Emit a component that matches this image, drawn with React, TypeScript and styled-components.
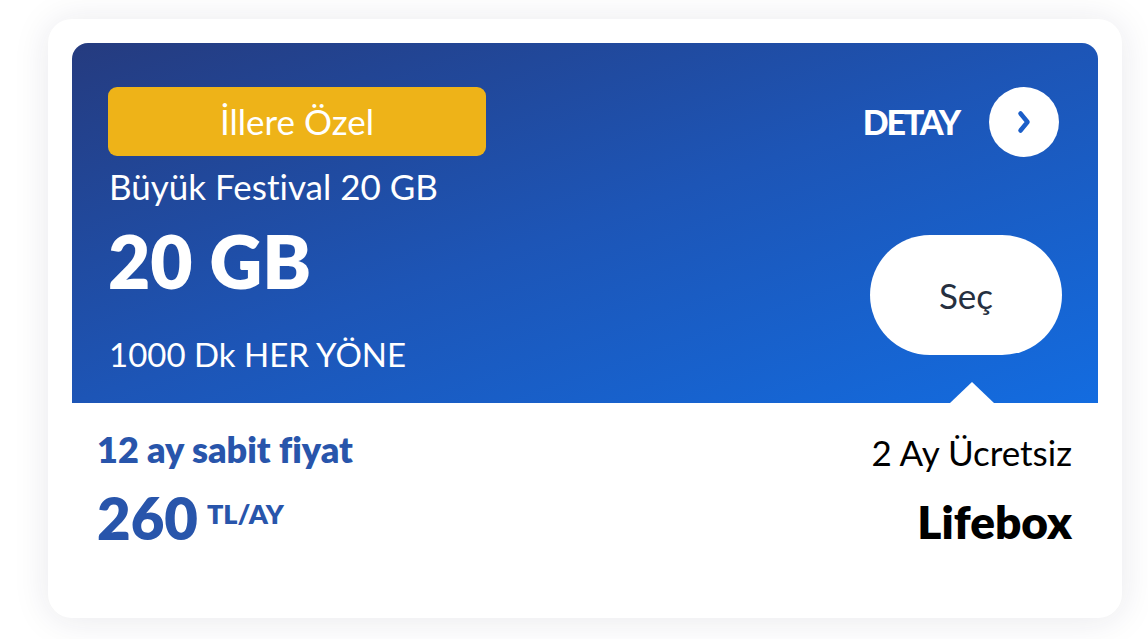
import React from "react";
import styled, { createGlobalStyle } from "styled-components";

const Global = createGlobalStyle`
  html, body { margin: 0; padding: 0; background: #ffffff; }
  body {
    font-family: Lato, "Noto Sans", sans-serif;
    -webkit-font-smoothing: antialiased;
    font-variant-ligatures: none;
    font-feature-settings: "liga" 0, "clig" 0;
  }
`;

const Page = styled.div`
  padding: 19px 0 0 48px;
  width: 1148px;
  height: 639px;
  box-sizing: border-box;
`;

const Card = styled.div`
  width: 1074px;
  height: 599px;
  box-sizing: border-box;
  background: #fff;
  border-radius: 24px;
  padding: 24px;
  box-shadow: 0 2px 36px rgba(30, 30, 70, 0.1);
  display: flex;
  flex-direction: column;
`;

const Hero = styled.div`
  position: relative;
  height: 360px;
  box-sizing: border-box;
  border-radius: 16px 16px 0 0;
  background: linear-gradient(to bottom right, #253b7f 0%, #1d55b6 50%, #136ce0 100%);
  padding: 44px 36px 0 36px;
  display: flex;
  justify-content: space-between;
`;

const LeftCol = styled.div`
  display: flex;
  flex-direction: column;
  color: #fff;
`;

const Badge = styled.div`
  width: 378px;
  height: 69px;
  border-radius: 9px;
  background: #eeb318;
  color: #fff;
  font-size: 35px;
  line-height: 35px;
  font-weight: 400;
  display: flex;
  align-items: center;
  justify-content: center;
`;

const Title = styled.div`
  margin-top: 13px;
  font-size: 35px;
  line-height: 35px;
  padding-left: 1px;
`;

const Big = styled.div`
  margin-top: 21px;
  font-size: 73px;
  font-weight: 800;
  line-height: 73px;
`;

const Minutes = styled.div`
  margin-top: 40px;
  font-size: 33px;
  line-height: 33px;
  padding-left: 1px;
`;

const RightCol = styled.div`
  display: flex;
  flex-direction: column;
  align-items: flex-end;
`;

const DetailRow = styled.div`
  display: flex;
  align-items: center;
  gap: 30px;
  margin-right: 3px;
`;

const DetailText = styled.span`
  color: #fff;
  font-size: 34px;
  line-height: 34px;
  font-weight: 900;
  letter-spacing: -2.2px;
`;

const Circle = styled.div`
  width: 70px;
  height: 70px;
  border-radius: 50%;
  background: #fff;
  display: flex;
  align-items: center;
  justify-content: center;
`;

const SelectButton = styled.div`
  margin-top: 78px;
  width: 192px;
  height: 120px;
  border-radius: 60px;
  background: #fff;
  color: #263040;
  font-size: 35px;
  line-height: 35px;
  display: flex;
  align-items: center;
  justify-content: center;
`;

const Notch = styled.div`
  position: absolute;
  right: 104px;
  bottom: 0;
  width: 0;
  height: 0;
  border-left: 22px solid transparent;
  border-right: 22px solid transparent;
  border-bottom: 21px solid #fff;
`;

const Bottom = styled.div`
  display: flex;
  justify-content: space-between;
  padding: 28px 26px 0 25px;
`;

const PriceCol = styled.div`
  display: flex;
  flex-direction: column;
  color: #2855ab;
`;

const Fixed = styled.div`
  font-size: 36px;
  font-weight: 800;
  line-height: 36px;
`;

const PriceRow = styled.div`
  margin-top: 22px;
  display: flex;
  align-items: flex-start;
  gap: 9px;
`;

const Amount = styled.span`
  font-size: 58px;
  font-weight: 800;
  line-height: 58px;
`;

const Unit = styled.span`
  font-size: 27px;
  font-weight: 800;
  line-height: 27px;
  margin-top: 11px;
`;

const PromoCol = styled.div`
  display: flex;
  flex-direction: column;
  align-items: flex-end;
  color: #000;
`;

const PromoText = styled.div`
  margin-top: 4px;
  font-size: 35px;
  line-height: 35px;
`;

const PromoName = styled.div`
  margin-top: 29px;
  font-size: 46px;
  font-weight: 800;
  line-height: 46px;
`;

export default function App() {
  return (
    <>
      <Global />
      <Page>
        <Card>
          <Hero>
            <LeftCol>
              <Badge>İllere Özel</Badge>
              <Title>Büyük Festival 20 GB</Title>
              <Big>20 GB</Big>
              <Minutes>1000 Dk HER YÖNE</Minutes>
            </LeftCol>
            <RightCol>
              <DetailRow>
                <DetailText>DETAY</DetailText>
                <Circle>
                  <svg width="16" height="26" viewBox="0 0 16 26">
                    <path d="M4.5 4.5 L11.5 13 L4.5 21.5" fill="none" stroke="#1b5ec8" strokeWidth="4.5" strokeLinecap="round" strokeLinejoin="round" />
                  </svg>
                </Circle>
              </DetailRow>
              <SelectButton>Seç</SelectButton>
            </RightCol>
            <Notch />
          </Hero>
          <Bottom>
            <PriceCol>
              <Fixed>12 ay sabit fiyat</Fixed>
              <PriceRow>
                <Amount>260</Amount>
                <Unit>TL/AY</Unit>
              </PriceRow>
            </PriceCol>
            <PromoCol>
              <PromoText>2 Ay Ücretsiz</PromoText>
              <PromoName>Lifebox</PromoName>
            </PromoCol>
          </Bottom>
        </Card>
      </Page>
    </>
  );
}
